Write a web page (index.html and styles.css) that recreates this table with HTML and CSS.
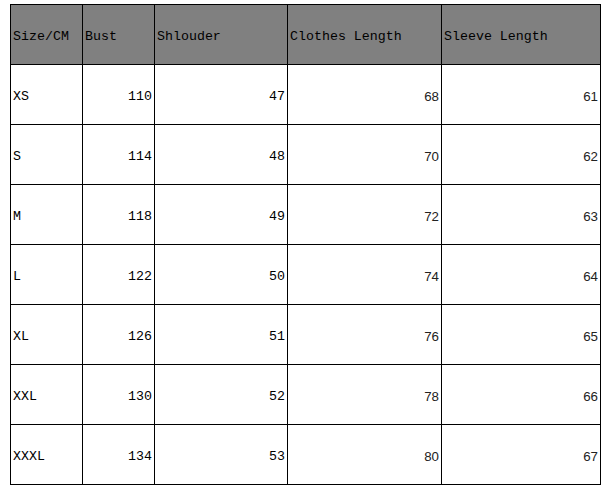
FILE: index.html
```html
<!DOCTYPE html>
<html>
<head>
<meta charset="utf-8">
<link rel="stylesheet" href="styles.css">
</head>
<body>
<div class="sheet">
<table class="size-table">
  <colgroup>
    <col class="c1"><col class="c2"><col class="c3"><col class="c4"><col class="c5">
  </colgroup>
  <thead>
    <tr><th>Size/CM</th><th>Bust</th><th>Shlouder</th><th>Clothes Length</th><th>Sleeve Length</th></tr>
  </thead>
  <tbody>
    <tr><td>XS</td><td class="num">110</td><td class="num">47</td><td class="num sans">68</td><td class="num sans">61</td></tr>
    <tr><td>S</td><td class="num">114</td><td class="num">48</td><td class="num sans">70</td><td class="num sans">62</td></tr>
    <tr><td>M</td><td class="num">118</td><td class="num">49</td><td class="num sans">72</td><td class="num sans">63</td></tr>
    <tr><td>L</td><td class="num">122</td><td class="num">50</td><td class="num sans">74</td><td class="num sans">64</td></tr>
    <tr><td>XL</td><td class="num">126</td><td class="num">51</td><td class="num sans">76</td><td class="num sans">65</td></tr>
    <tr><td>XXL</td><td class="num">130</td><td class="num">52</td><td class="num sans">78</td><td class="num sans">66</td></tr>
    <tr><td>XXXL</td><td class="num">134</td><td class="num">53</td><td class="num sans">80</td><td class="num sans">67</td></tr>
  </tbody>
</table>
</div>
</body>
</html>
```

FILE: styles.css
```css
html, body {
  margin: 0;
  padding: 0;
  background: #ffffff;
}
.sheet {
  padding: 4px 0 0 10px;
}
.size-table {
  border-collapse: collapse;
  table-layout: fixed;
  width: 590px;
  font-family: "Liberation Mono", "DejaVu Sans Mono", monospace;
  font-size: 13.3px;
  color: #000;
}
.c1 { width: 72px; }
.c2 { width: 72px; }
.c3 { width: 133px; }
.c4 { width: 154px; }
.c5 { width: 159px; }
.size-table th,
.size-table td {
  border: 1px solid #000;
  height: 55px;
  padding: 4px 2px 0 2px;
  vertical-align: middle;
  text-align: left;
  font-weight: normal;
  white-space: nowrap;
  overflow: hidden;
}
.size-table th {
  background: #808080;
}
.size-table td.num {
  text-align: right;
}
.size-table td.sans {
  font-family: "Liberation Sans", Arial, sans-serif;
  font-size: 13.3px;
  color: #222;
}
```
